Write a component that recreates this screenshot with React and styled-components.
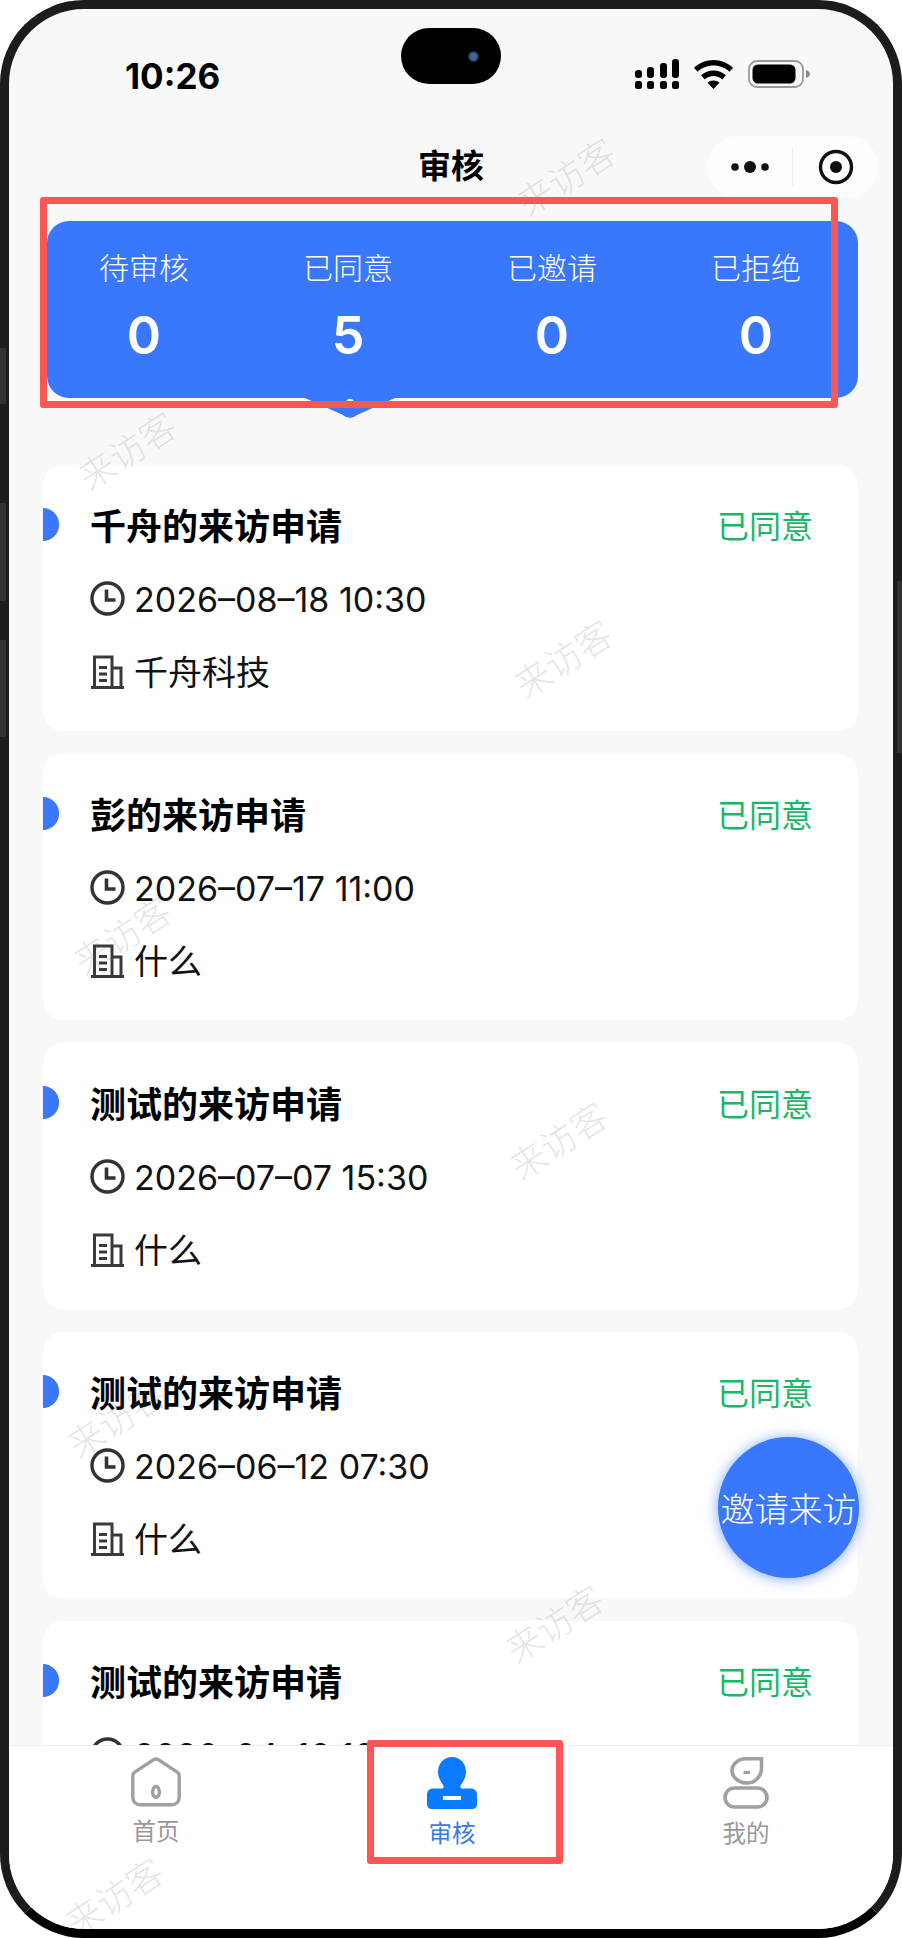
import React from "react";
import styled, { createGlobalStyle } from "styled-components";

const FONT = `"Noto Sans CJK SC", "Noto Sans", sans-serif`;
const BLUE = "#3977fd";

const Global = createGlobalStyle`
  html, body { margin: 0; padding: 0; background: #fff; }
  body { font-family: ${FONT}; width: 902px; height: 1938px; overflow: hidden; }
  * { box-sizing: border-box; }
`;

const Device = styled.div`
  position: relative;
  width: 902px;
  height: 1938px;
`;
const SideButton = styled.div`
  position: absolute;
  ${(p) => (p.$right ? "right: 0;" : "left: 0;")}
  top: ${(p) => p.$y}px;
  width: ${(p) => (p.$right ? 5 : 6)}px;
  height: ${(p) => p.$h}px;
  background: #323234;
  z-index: 2;
`;
const Phone = styled.div`
  position: relative;
  width: 902px;
  height: 1938px;
  border: 9px solid #1c1c1e;
  border-bottom-color: #000;
  border-radius: 84px;
  background: #f8f8f8;
  overflow: hidden;
  display: flex;
  flex-direction: column;
`;

const StatusBar = styled.div`
  height: 107px;
  flex: none;
  display: flex;
  align-items: flex-start;
  justify-content: space-between;
  padding: 45px 82px 0 116px;
`;
const Clock = styled.div`
  font-family: Inter, "Liberation Sans", sans-serif;
  font-weight: 700;
  font-size: 35px;
  line-height: 44px;
  color: #000;
`;
const StatusIcons = styled.div`
  display: flex;
  align-items: center;
  gap: 15px;
  margin-top: 5px;
`;
const Notch = styled.div`
  position: absolute;
  left: 392px;
  top: 19px;
  width: 100px;
  height: 56px;
  border-radius: 28px;
  background: #000;
  display: flex;
  align-items: center;
  justify-content: flex-end;
  padding-right: 22px;
`;
const Camera = styled.div`
  width: 11px;
  height: 11px;
  border-radius: 50%;
  background: radial-gradient(circle, #47689a 0 35%, #1d2b44 70%, #0b0f18 100%);
`;

const NavBar = styled.div`
  position: relative;
  height: 105px;
  flex: none;
  display: flex;
  align-items: flex-start;
  justify-content: center;
`;
const NavTitle = styled.div`
  font-size: 33px;
  font-weight: 700;
  line-height: 46px;
  margin-top: 25px;
  color: #000;
`;
const Capsule = styled.div`
  position: absolute;
  left: 698px;
  top: 20px;
  width: 171px;
  height: 62px;
  border-radius: 31px;
  background: rgba(255, 255, 255, 0.75);
  display: flex;
  align-items: center;
`;
const CapsulePart = styled.div`
  flex: 1;
  height: 38px;
  display: flex;
  align-items: center;
  justify-content: center;
  & + & { border-left: 1px solid #eee; }
`;

const Stats = styled.div`
  position: relative;
  flex: none;
  height: 177px;
  margin: 0 35px 0 38px;
  border-radius: 22px;
  background: ${BLUE};
  display: flex;
  justify-content: space-between;
  padding: 23px 57px 0 52px;
`;
const Pointer = styled.svg`
  position: absolute;
  left: 258px;
  top: 172px;
`;
const Stat = styled.div`
  width: 90px;
  display: flex;
  flex-direction: column;
  align-items: center;
  color: #fff;
`;
const StatLabel = styled.div`
  font-size: 30px;
  line-height: 44px;
  font-weight: 300;
  white-space: nowrap;
`;
const StatValue = styled.div`
  font-family: Inter, "Liberation Sans", sans-serif;
  font-size: 52px;
  line-height: 60px;
  font-weight: 600;
  margin-top: 18px;
`;

const List = styled.div`
  flex: 1;
  min-height: 0;
  overflow: hidden;
  display: flex;
  flex-direction: column;
  gap: 23px;
  margin-top: 67px;
  padding: 0 35px 0 34px;
`;
const Card = styled.div`
  position: relative;
  flex: none;
  height: 266px;
  border-radius: 20px;
  background: #fff;
  padding: 22px 45px 0 47px;
`;
const Marker = styled.div`
  position: absolute;
  left: 0;
  top: 43px;
  width: 16px;
  height: 33px;
  border-radius: 0 17px 17px 0;
  background: ${BLUE};
`;
const TitleRow = styled.div`
  display: flex;
  align-items: center;
  justify-content: space-between;
  height: 74px;
`;
const CardTitle = styled.div`
  font-size: 36px;
  font-weight: 700;
  color: #000;
  margin-top: -1px;
`;
const CardStatus = styled.div`
  font-size: 32px;
  color: #19b868;
  margin-top: -1px;
`;
const InfoRow = styled.div`
  display: flex;
  align-items: center;
  gap: 9px;
  height: 74px;
  font-size: 34px;
  font-weight: 400;
  color: #111;
  white-space: nowrap;
`;
const TimeText = styled.span`
  font-family: Inter, "Liberation Sans", sans-serif;
  font-size: 34px;
  font-weight: 400;
  margin-top: 2px;
`;
const CompanyText = styled.span`
  margin-top: -3px;
`;

const TabBar = styled.div`
  flex: none;
  position: relative;
  height: 184px;
  background: #fff;
  border-top: 1px solid #eee;
  padding-top: 11px;
  display: flex;
  align-items: flex-start;
`;
const Tab = styled.div`
  position: absolute;
  left: ${(p) => p.$x}px;
  width: 120px;
  margin-left: -60px;
  display: flex;
  flex-direction: column;
  align-items: center;
  color: ${(p) => (p.$active ? "#3b78e6" : "#999")};
`;
const TabLabel = styled.div`
  font-size: 23.500px;
  line-height: 34px;
  margin-top: 6px;
`;

const Fab = styled.div`
  position: absolute;
  left: 709px;
  top: 1428px;
  width: 141px;
  height: 141px;
  border-radius: 50%;
  background: ${BLUE};
  box-shadow: 0 1px 14px rgba(57, 119, 253, 0.65);
  color: #fff;
  font-size: 34px;
  font-weight: 300;
  display: flex;
  align-items: center;
  justify-content: center;
  white-space: nowrap;
`;

const Watermark = styled.div`
  position: absolute;
  left: ${(p) => p.$x - 9 - 60}px;
  top: ${(p) => p.$y - 9 - 25}px;
  width: 120px;
  height: 50px;
  line-height: 50px;
  text-align: center;
  font-size: 36px;
  font-weight: 300;
  color: rgba(120, 120, 120, 0.2);
  transform: rotate(-33deg);
  pointer-events: none;
  white-space: nowrap;
`;

const Annotation = styled.div`
  position: absolute;
  left: ${(p) => p.$x - 9}px;
  top: ${(p) => p.$y - 9}px;
  width: ${(p) => p.$w}px;
  height: ${(p) => p.$h}px;
  border: 7px solid #fb5656;
  border-radius: 3px;
  pointer-events: none;
`;

const SignalIcon = () => (
  <svg width="44" height="30" viewBox="0 0 44 30" fill="#000">
    <rect x="0" y="11" width="7" height="8" rx="3" />
    <rect x="12" y="8" width="7" height="11" rx="3" />
    <rect x="25" y="4" width="7" height="15" rx="3" />
    <rect x="37" y="0" width="7" height="19" rx="3" />
    <rect x="0" y="22" width="7" height="8" rx="2.5" />
    <rect x="12" y="22" width="7" height="8" rx="2.5" />
    <rect x="25" y="22" width="7" height="8" rx="2.5" />
    <rect x="37" y="22" width="7" height="8" rx="2.5" />
  </svg>
);
const WifiIcon = () => (
  <svg width="39" height="29" viewBox="0 0 39 29" fill="#000">
    <path d="M19.5 0C27 0 33.800 2.900 39 7.700L35.500 11.800C31.300 7.900 25.700 5.600 19.500 5.600S7.700 7.900 3.500 11.800L0 7.700C5.200 2.900 12 0 19.500 0Z" />
    <path d="M19.500 10.500C24.300 10.500 28.500 12.300 31.800 15.300L28.300 19.400C26 17.300 22.900 16 19.500 16S13 17.300 10.700 19.400L7.200 15.300C10.500 12.300 14.700 10.500 19.500 10.500Z" />
    <path d="M19.500 20.500C21.800 20.500 23.900 21.300 25.500 22.700L19.500 29L13.500 22.700C15.100 21.300 17.200 20.500 19.500 20.500Z" />
  </svg>
);
const BatteryIcon = () => (
  <svg width="63" height="29" viewBox="0 0 63 29">
    <rect x="1" y="1" width="54" height="26" rx="8" fill="none" stroke="#999" strokeWidth="1.800" />
    <rect x="4.500" y="4.500" width="43" height="19" rx="5.500" fill="#000" />
    <path d="M58 10 C60.500 11 62 12.500 62 14 C62 15.500 60.500 17 58 18Z" fill="#888" />
  </svg>
);

const ClockIcon = () => (
  <svg width="35" height="35" viewBox="0 0 35 35" fill="none" stroke="#333" strokeWidth="3.400">
    <circle cx="17.500" cy="17.500" r="15.500" />
    <path d="M16.500 8.500V19H25.500" strokeWidth="3.600" />
  </svg>
);
const BuildingIcon = () => (
  <svg width="35" height="35" viewBox="0 0 35 35" fill="none" stroke="#3a3a3a" strokeWidth="3">
    <path d="M1 32.500H34" />
    <path d="M4.500 32V2H22V32" />
    <path d="M22 13H31V32" />
    <path d="M9 12.500H17M9 19H17M9 25.500H17" />
  </svg>
);

const HomeIcon = () => (
  <svg width="50" height="50" viewBox="0 0 50 50" fill="none" stroke="#a0a0a0" strokeWidth="3.400">
    <path d="M22.300 2.900 3.700 15.200C2.500 16 1.800 17.300 1.800 18.800V40C1.800 44.700 4.700 47.800 9.500 47.800H40.500C45.300 47.800 48.200 44.700 48.200 40V18.800C48.200 17.300 47.500 16 46.300 15.200L27.700 2.900C26 1.800 24 1.800 22.300 2.900Z" />
    <ellipse cx="25" cy="35" rx="3.400" ry="5.600" />
  </svg>
);
const StampIcon = () => (
  <svg width="50" height="52" viewBox="0 0 50 52">
    <path
      fill="#0a7aff"
      fillRule="evenodd"
      d="M25 0C33 0 39 6.500 39 15C39 21 35.500 25 33.500 29C33 30.500 33.500 31.500 35 31.500H44C47.500 31.500 50 34 50 37.500V47C50 50 48 52 45 52H5C2 52 0 50 0 47V37.500C0 34 2.500 31.500 6 31.500H15C16.500 31.500 17 30.500 16.500 29C14.500 25 11 21 11 15C11 6.500 17 0 25 0ZM16 39V43H34V39Z"
    />
  </svg>
);
const MeIcon = () => (
  <svg width="46" height="52" viewBox="0 0 46 52" fill="none" stroke="#a0a0a0" strokeWidth="3.600">
    <path d="M23 1.800H38.500V11C38.500 19.500 32 26 24 26S9 20 9 14C9 7 15 1.800 23 1.800Z" />
    <path d="M20.500 15.500H27" strokeWidth="3" />
    <rect x="2" y="31" width="42" height="19" rx="9.500" />
  </svg>
);

const stats = [
  ["待审核", 0],
  ["已同意", 5],
  ["已邀请", 0],
  ["已拒绝", 0],
];
const visits = [
  ["千舟的来访申请", "2026–08–18 10:30", "千舟科技"],
  ["彭的来访申请", "2026–07–17 11:00", "什么"],
  ["测试的来访申请", "2026–07–07 15:30", "什么"],
  ["测试的来访申请", "2026–06–12 07:30", "什么"],
  ["测试的来访申请", "2026–04–16 10:00", "什么"],
];
const marks = [
  [565, 175], [126, 449], [562, 657], [121, 934],
  [557, 1139], [115, 1417], [553, 1622], [113, 1895],
];

export default function App() {
  return (
    <Device>
      <Global />
      <SideButton $y={348} $h={56} />
      <SideButton $y={503} $h={98} />
      <SideButton $y={640} $h={97} />
      <SideButton $right $y={581} $h={172} />
      <Phone>
        <StatusBar>
          <Clock>10:26</Clock>
          <StatusIcons>
            <SignalIcon />
            <WifiIcon />
            <BatteryIcon />
          </StatusIcons>
        </StatusBar>
        <Notch>
          <Camera />
        </Notch>
        <NavBar>
          <NavTitle>审核</NavTitle>
          <Capsule>
            <CapsulePart>
              <svg width="38" height="16" viewBox="0 0 38 16" fill="#111">
                <circle cx="4" cy="8" r="3.800" />
                <circle cx="19" cy="8" r="6" />
                <circle cx="34" cy="8" r="3.800" />
              </svg>
            </CapsulePart>
            <CapsulePart>
              <svg width="36" height="36" viewBox="0 0 36 36">
                <circle cx="18" cy="18" r="15.500" fill="none" stroke="#111" strokeWidth="3.400" />
                <circle cx="18" cy="18" r="6" fill="#111" />
              </svg>
            </CapsulePart>
          </Capsule>
        </NavBar>
        <Stats>
          {stats.map(([label, value]) => (
            <Stat key={label}>
              <StatLabel>{label}</StatLabel>
              <StatValue>{value}</StatValue>
            </Stat>
          ))}
          <Pointer width="90" height="26" viewBox="0 0 90 26">
            <path d="M0 0H90V5L52 22C47.500 25.500 42.500 25.500 38 22L0 5Z" fill={BLUE} />
            <path d="M41.500 8C42.500 5 47.500 5 48.500 8Z" fill="#fff" />
          </Pointer>
        </Stats>
        <List>
          {visits.map(([title, time, company], i) => (
            <Card key={i}>
              <Marker />
              <TitleRow>
                <CardTitle>{title}</CardTitle>
                <CardStatus>已同意</CardStatus>
              </TitleRow>
              <InfoRow>
                <ClockIcon />
                <TimeText>{time}</TimeText>
              </InfoRow>
              <InfoRow>
                <BuildingIcon />
                <CompanyText>{company}</CompanyText>
              </InfoRow>
            </Card>
          ))}
        </List>
        <TabBar>
          <Tab $x={147}>
            <HomeIcon />
            <TabLabel>首页</TabLabel>
          </Tab>
          <Tab $x={443} $active>
            <StampIcon />
            <TabLabel>审核</TabLabel>
          </Tab>
          <Tab $x={737}>
            <MeIcon />
            <TabLabel>我的</TabLabel>
          </Tab>
        </TabBar>
        <Fab>邀请来访</Fab>
        {marks.map(([x, y]) => (
          <Watermark key={`${x}-${y}`} $x={x} $y={y}>来访客</Watermark>
        ))}
        <Annotation $x={40} $y={197} $w={798} $h={211} />
        <Annotation $x={367} $y={1740} $w={196} $h={124} />
      </Phone>
    </Device>
  );
}
